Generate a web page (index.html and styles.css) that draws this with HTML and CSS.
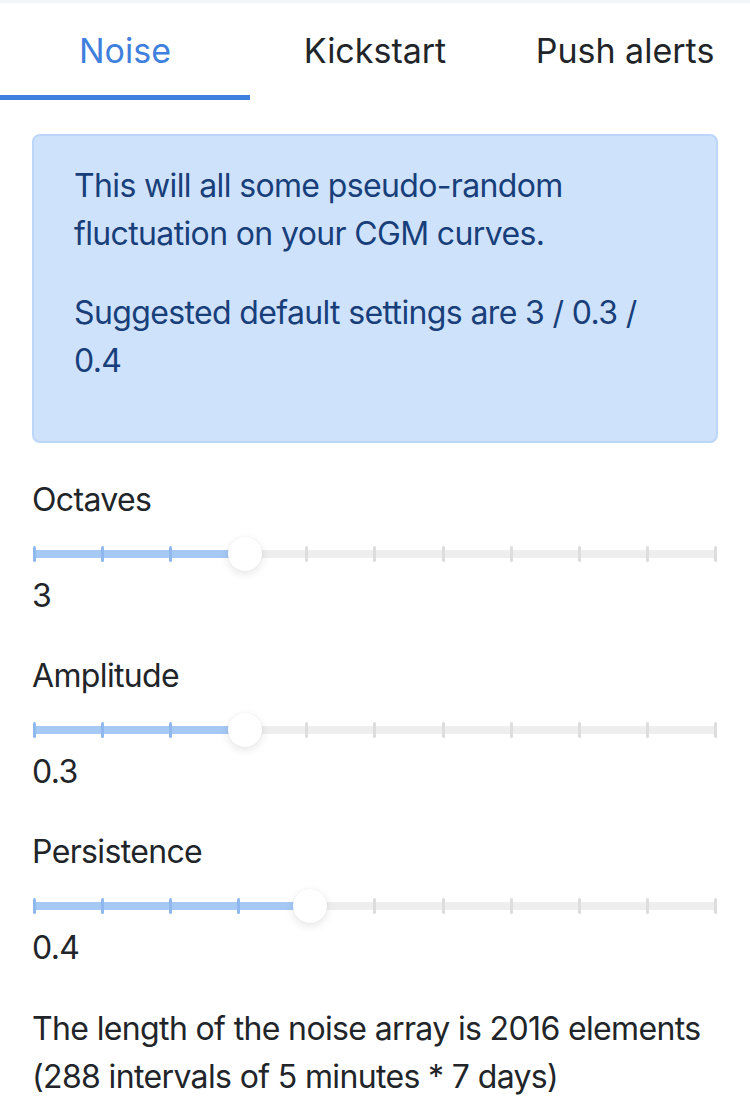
FILE: index.html
```html
<!DOCTYPE html>
<html lang="en">
<head>
<meta charset="utf-8">
<title>Noise settings</title>
<link rel="stylesheet" href="styles.css">
</head>
<body>
<nav class="tabs">
  <a class="tab active">Noise</a>
  <a class="tab">Kickstart</a>
  <a class="tab">Push alerts</a>
</nav>
<main class="content">
  <div class="alert">
    <p>This will all some pseudo-random fluctuation on your CGM curves.</p>
    <p>Suggested default settings are 3 / 0.3 / 0.4</p>
  </div>

  <section class="field">
    <div class="label">Octaves</div>
    <div class="slider" style="--v:0.3">
      <div class="track"></div>
      <div class="fill"></div>
      <div class="ticks">
        <span class="tick on"></span><span class="tick on"></span><span class="tick on"></span><span class="tick on"></span><span class="tick"></span><span class="tick"></span><span class="tick"></span><span class="tick"></span><span class="tick"></span><span class="tick"></span><span class="tick"></span>
      </div>
      <div class="thumb"></div>
    </div>
    <div class="value">3</div>
  </section>

  <section class="field">
    <div class="label">Amplitude</div>
    <div class="slider" style="--v:0.3">
      <div class="track"></div>
      <div class="fill"></div>
      <div class="ticks">
        <span class="tick on"></span><span class="tick on"></span><span class="tick on"></span><span class="tick on"></span><span class="tick"></span><span class="tick"></span><span class="tick"></span><span class="tick"></span><span class="tick"></span><span class="tick"></span><span class="tick"></span>
      </div>
      <div class="thumb"></div>
    </div>
    <div class="value">0.3</div>
  </section>

  <section class="field">
    <div class="label">Persistence</div>
    <div class="slider" style="--v:0.4">
      <div class="track"></div>
      <div class="fill"></div>
      <div class="ticks">
        <span class="tick on"></span><span class="tick on"></span><span class="tick on"></span><span class="tick on"></span><span class="tick on"></span><span class="tick"></span><span class="tick"></span><span class="tick"></span><span class="tick"></span><span class="tick"></span><span class="tick"></span>
      </div>
      <div class="thumb"></div>
    </div>
    <div class="value">0.4</div>
  </section>

  <p class="note">The length of the noise array is 2016 elements (288 intervals of 5 minutes * 7 days)</p>
</main>
</body>
</html>
```

FILE: styles.css
```css
* { box-sizing: border-box; }
html, body { margin: 0; padding: 0; background: #fff; }
body {
  font-family: Inter, "Noto Sans", "Liberation Sans", sans-serif;
  font-size: 32px;
  line-height: 48px;
  letter-spacing: -0.02em;
  color: #212529;
  border-top: 3px solid #f4f5f7;
}
.tabs {
  display: flex;
  height: 97px;
}
.tab {
  flex: 1 1 0;
  text-align: center;
  padding-top: 24px;
  font-size: 34px;
  line-height: 48px;
  letter-spacing: 0;
  color: #212529;
  border-bottom: 5px solid transparent;
}
.tab.active {
  color: #3f7fdd;
  border-bottom-color: #3f7fdd;
}
.content {
  padding: 34px 32px 0 32px;
}
.alert {
  background: #cfe2fc;
  border: 2px solid #bcd6fa;
  border-radius: 8px;
  color: #183f7a;
  padding: 26px 40px 25px 40px;
}
.alert p { margin: 0 0 31px 0; }
.field { margin-top: 33px; }
.field + .field { margin-top: 32px; }
.label, .value { line-height: 48px; }
.slider {
  position: relative;
  height: 48px;
  margin: 0 2px 0 2px;
}
.track {
  position: absolute;
  left: 0; right: 0;
  top: 26px;
  height: 8px;
  background: #eeeeee;
}
.fill {
  position: absolute;
  left: 0;
  top: 26px;
  height: 8px;
  width: calc(17px + var(--v) * (100% - 34px));
  background: #a5c8f4;
}
.ticks {
  position: absolute;
  left: 0; right: 0;
  top: 22px;
  height: 16px;
  display: flex;
  justify-content: space-between;
  margin: 0 -1px;
}
.tick {
  width: 3px;
  height: 16px;
  background: #dddddd;
  border-radius: 2px;
}
.tick.on { background: #8fb8ee; }
.thumb {
  position: absolute;
  top: 13px;
  left: calc(17px + var(--v) * (100% - 34px));
  width: 34px;
  height: 34px;
  margin-left: -17px;
  border-radius: 50%;
  background: #fff;
  box-shadow: 0 3px 10px rgba(0, 0, 0, 0.10), 0 0 2px rgba(0, 0, 0, 0.06);
}
.note { margin: 33px 0 0 0; }
```
